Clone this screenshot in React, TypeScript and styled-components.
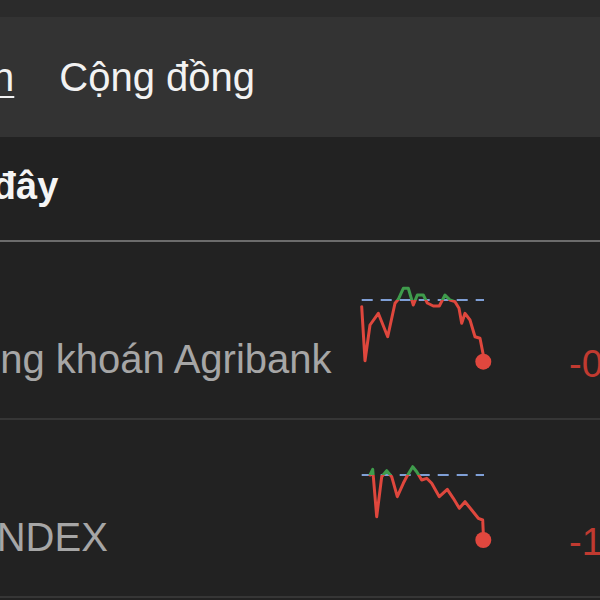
import React, {useId} from 'react';
import styled, {createGlobalStyle} from 'styled-components';

type StockType = {
    name: string
    shift: number
    value: string
    points: string
    baseY: number
    dot: [number, number]
}

const stocks: StockType[] = [
    {
        name: 'CTCP Chứng khoán Agribank',
        shift: -197,
        value: '-0,42%',
        baseY: 23,
        points: '6.7,29.7 10,83.7 15,48 23.3,36.3 32.7,59.7 40,26.3 43.3,22.3 48.3,11.3 53.3,11.3 58.3,28 62.3,18 68.3,18 72.3,26 78.3,29 84.3,29 90,18 95,23 100,24.7 104,31.3 106.7,46.3 110,36.3 115,43 120,59.7 125,61.3 128.3,78 128.3,84.7',
        dot: [128.3, 84.7],
    },
    {
        name: 'VNINDEX',
        shift: -70,
        value: '-1,25%',
        baseY: 20,
        points: '15,20 17.7,14.3 21.7,61.7 26.7,21.7 31.7,15.7 36.7,21.7 42.3,41.7 48.3,28.3 51.7,21.7 57.7,11.7 61.7,16.7 66.7,25 71.7,23.3 76.7,28.3 84.3,41.7 92.3,34.3 98.3,43.3 104.3,53.3 110,46.7 116.7,55 123.3,63.3 127.7,65 128.3,78.3 128.3,85',
        dot: [128.3, 85],
    },
]

const Sparkline = (props: { stock: StockType }) => {
    const id = useId().replace(/:/g, '')
    const {points, baseY, dot} = props.stock
    return (
        <svg width="140" height="100" viewBox="0 0 140 100">
            <defs>
                <clipPath id={`up${id}`}>
                    <rect x="0" y="0" width="140" height={baseY}/>
                </clipPath>
                <clipPath id={`down${id}`}>
                    <rect x="0" y={baseY} width="140" height={100 - baseY}/>
                </clipPath>
            </defs>
            <line x1="6.7" y1={baseY} x2="129" y2={baseY} stroke="#7f9fd6" strokeWidth="2.2"
                  strokeDasharray="11 8"/>
            <polyline points={points} fill="none" stroke="#3f9c4c" strokeWidth="3"
                      strokeLinejoin="round" strokeLinecap="round" clipPath={`url(#up${id})`}/>
            <polyline points={points} fill="none" stroke="#df473d" strokeWidth="3"
                      strokeLinejoin="round" strokeLinecap="round" clipPath={`url(#down${id})`}/>
            <circle cx={dot[0]} cy={dot[1]} r="8" fill="#e0473e"/>
        </svg>
    )
}

const App = () => {
    return (
        <>
            <GlobalStyle/>
            <Screen>
                <StatusStrip/>
                <TabBar>
                    <TabList>
                        <Tab active>Tổng quan</Tab>
                        <Tab>Cộng đồng</Tab>
                    </TabList>
                </TabBar>
                <Section>
                    <Heading>Đã xem gần đây</Heading>
                </Section>
                {stocks.map(s => (
                    <Row key={s.name}>
                        <NameCell>
                            <Name shift={s.shift}>{s.name}</Name>
                        </NameCell>
                        <ChartCell>
                            <Sparkline stock={s}/>
                        </ChartCell>
                        <Value>{s.value}</Value>
                    </Row>
                ))}
            </Screen>
        </>
    )
}

export default App

const GlobalStyle = createGlobalStyle`
  html, body {
    margin: 0;
    padding: 0;
    overflow: hidden;
    background: #222222;
    font-family: "Liberation Sans", Arial, sans-serif;
  }
`

const Screen = styled.div`
  width: 720px;
  min-height: 600px;
  background: #222222;
`

const StatusStrip = styled.div`
  height: 17px;
  background: #2b2b2b;
`

const TabBar = styled.div`
  height: 120px;
  background: #333333;
  display: flex;
  align-items: center;
`

const TabList = styled.div`
  display: flex;
  gap: 45px;
  margin-left: -177px;
`

const Tab = styled.span<{ active?: boolean }>`
  font-size: 40px;
  line-height: 48px;
  color: #f2f2f2;
  white-space: nowrap;
  text-decoration: ${props => props.active ? 'underline' : 'none'};
  text-decoration-thickness: 2px;
  text-underline-offset: 5px;
`

const Section = styled.div`
  padding: 26px 0 31px;
  border-bottom: 2px solid #6c6c6c;
`

const Heading = styled.div`
  margin-left: -231px;
  font-size: 38px;
  line-height: 46px;
  font-weight: 700;
  color: #f5f5f5;
  white-space: nowrap;
`

const Row = styled.div`
  display: grid;
  grid-template-columns: 355px 140px 1fr;
  height: 176px;
  border-bottom: 2px solid #363636;
`

const NameCell = styled.div`
  padding-top: 93px;
`

const Name = styled.div<{ shift: number }>`
  margin-left: ${props => props.shift}px;
  font-size: 40px;
  line-height: 48px;
  color: #a6a6a6;
  white-space: nowrap;
`

const ChartCell = styled.div`
  padding-top: 35px;
`

const Value = styled.div`
  padding: 99px 0 0 74px;
  font-size: 38px;
  line-height: 46px;
  color: #c13a30;
  white-space: nowrap;
`
